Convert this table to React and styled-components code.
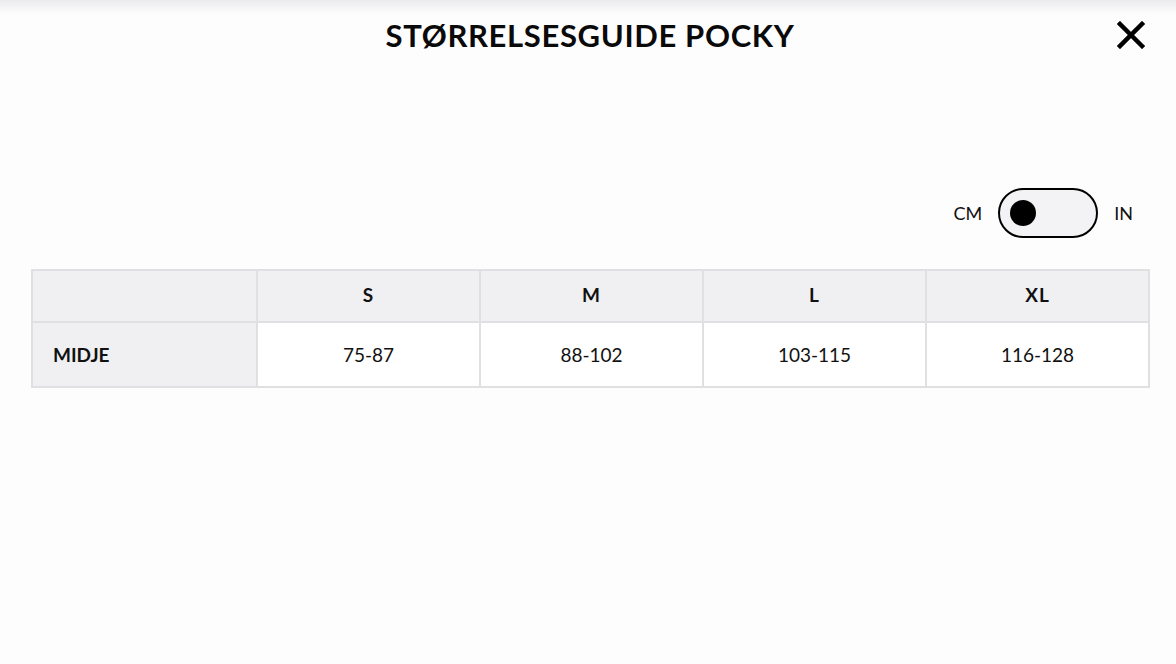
import styled, { createGlobalStyle } from "styled-components";

const GlobalStyle = createGlobalStyle`
  html, body {
    margin: 0;
    padding: 0;
    background: #fefdfe;
  }
  body {
    font-family: "Lato", "Noto Sans", sans-serif;
    color: #111;
  }
`;

const sizes = ["S", "M", "L", "XL"];
const rows = [{ label: "MIDJE", values: ["75-87", "88-102", "103-115", "116-128"] }];

export default function App() {
  return (
    <>
      <GlobalStyle />
      <Page>
        <Header>
          <Title>STØRRELSESGUIDE POCKY</Title>
          <CloseButton aria-label="close">
            <svg width="28" height="28" viewBox="0 0 28 28">
              <path
                d="M3 3 L25 25 M25 3 L3 25"
                stroke="#000"
                strokeWidth="4.5"
                strokeLinecap="square"
              />
            </svg>
          </CloseButton>
        </Header>

        <UnitRow>
          <UnitLabel>CM</UnitLabel>
          <Toggle>
            <Knob />
          </Toggle>
          <UnitLabel>IN</UnitLabel>
        </UnitRow>

        <Table>
          <HeadCell />
          {sizes.map((s) => (
            <HeadCell key={s}>{s}</HeadCell>
          ))}
          {rows.map((r) => (
            <>
              <RowLabel key={r.label}>{r.label}</RowLabel>
              {r.values.map((v) => (
                <Cell key={v}>{v}</Cell>
              ))}
            </>
          ))}
        </Table>
      </Page>
    </>
  );
}

const Page = styled.div`
  width: 1176px;
  height: 664px;
  box-sizing: border-box;
  padding: 0 26px 0 30px;
  background: linear-gradient(180deg, #ebeaec 0px, #fefdfe 14px, #fefdfe 100%);
`;

const Header = styled.div`
  height: 74px;
  display: flex;
  align-items: center;
  justify-content: center;
  position: relative;
`;

const Title = styled.h1`
  margin: 0 0 4px;
  font-size: 31px;
  font-weight: 700;
  letter-spacing: 0.65px;
  color: #0a0a0a;
`;

const CloseButton = styled.button`
  position: absolute;
  right: 4px;
  top: 20px;
  width: 30px;
  height: 30px;
  padding: 0;
  border: 0;
  background: none;
  display: flex;
  align-items: center;
  justify-content: center;
`;

const UnitRow = styled.div`
  margin-top: 114px;
  display: flex;
  justify-content: flex-end;
  align-items: center;
  gap: 16px;
  padding-right: 17px;
`;

const UnitLabel = styled.span`
  font-size: 18px;
  color: #111;
`;

const Toggle = styled.div`
  width: 86px;
  height: 46px;
  border: 2px solid #000;
  border-radius: 25px;
  background: #f3f2f4;
  display: flex;
  align-items: center;
  padding-left: 10px;
`;

const Knob = styled.div`
  width: 26px;
  height: 26px;
  border-radius: 50%;
  background: #000;
`;

const Table = styled.div`
  margin-top: 31px;
  margin-left: 1px;
  display: grid;
  grid-template-columns: repeat(5, 1fr);
  grid-template-rows: 52px 63px;
  border: 2px solid #e0dfe1;
  width: 1119px;
  box-sizing: border-box;
`;

const BaseCell = styled.div`
  display: flex;
  align-items: center;
  font-size: 19px;
  border-left: 2px solid #e0dfe1;
  &:nth-child(5n + 1) {
    border-left: 0;
  }
`;

const HeadCell = styled(BaseCell)`
  justify-content: center;
  background: #f0eff1;
  font-weight: 700;
  letter-spacing: 1px;
  border-bottom: 2px solid #e0dfe1;
  padding-bottom: 4px;
`;

const RowLabel = styled(BaseCell)`
  background: #f0eff1;
  font-weight: 700;
  padding-left: 20px;
`;

const Cell = styled(BaseCell)`
  justify-content: center;
  background: #fff;
`;
